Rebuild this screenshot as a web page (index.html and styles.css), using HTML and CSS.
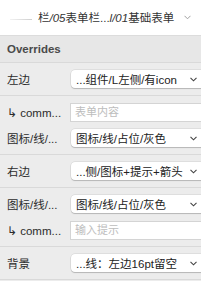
FILE: index.html
```html
<!DOCTYPE html>
<html lang="zh">
<head>
<meta charset="utf-8">
<link rel="stylesheet" href="styles.css">
</head>
<body>
<div class="panel">
  <div class="top">
    <span class="thumb"></span>
    <span class="path">栏<i>/05</i>表单栏...<i>l/01</i>基础表单</span>
    <svg class="chev top-chev" width="7" height="5" viewBox="0 0 7 5"><path d="M0.5 0.8 L3.5 3.8 L6.5 0.8" fill="none" stroke="#a0a0a0" stroke-width="1"/></svg>
  </div>
  <div class="hdr">Overrides</div>

  <div class="group">
    <div class="row">
      <span class="label">左边</span>
      <div class="select"><span class="val">...组件/L左侧/有icon</span><svg class="chev" width="7" height="5" viewBox="0 0 7 5"><path d="M0.5 0.8 L3.5 3.8 L6.5 0.8" fill="none" stroke="#444" stroke-width="1.1"/></svg></div>
    </div>
  </div>

  <div class="group">
    <div class="row">
      <span class="label">↳ comm...</span>
      <div class="input">表单内容</div>
    </div>
    <div class="row">
      <span class="label">图标/线/...</span>
      <div class="select"><span class="val">图标/线/占位/灰色</span><svg class="chev" width="7" height="5" viewBox="0 0 7 5"><path d="M0.5 0.8 L3.5 3.8 L6.5 0.8" fill="none" stroke="#444" stroke-width="1.1"/></svg></div>
    </div>
  </div>

  <div class="group">
    <div class="row">
      <span class="label">右边</span>
      <div class="select"><span class="val">...侧/图标+提示+箭头</span><svg class="chev" width="7" height="5" viewBox="0 0 7 5"><path d="M0.5 0.8 L3.5 3.8 L6.5 0.8" fill="none" stroke="#444" stroke-width="1.1"/></svg></div>
    </div>
  </div>

  <div class="group">
    <div class="row">
      <span class="label">图标/线/...</span>
      <div class="select"><span class="val">图标/线/占位/灰色</span><svg class="chev" width="7" height="5" viewBox="0 0 7 5"><path d="M0.5 0.8 L3.5 3.8 L6.5 0.8" fill="none" stroke="#444" stroke-width="1.1"/></svg></div>
    </div>
    <div class="row">
      <span class="label">↳ comm...</span>
      <div class="input">输入提示</div>
    </div>
  </div>

  <div class="group">
    <div class="row">
      <span class="label">背景</span>
      <div class="select"><span class="val">...线：左边16pt留空</span><svg class="chev" width="7" height="5" viewBox="0 0 7 5"><path d="M0.5 0.8 L3.5 3.8 L6.5 0.8" fill="none" stroke="#444" stroke-width="1.1"/></svg></div>
    </div>
  </div>
</div>
</body>
</html>
```

FILE: styles.css
```css
html, body {
  margin: 0;
  padding: 0;
  background: #ececec;
}
body {
  width: 201px;
  height: 281px;
  overflow: hidden;
  font-family: "Liberation Sans", "Noto Sans CJK SC", sans-serif;
  font-size: 11.5px;
  color: #2b2b2b;
}
.panel {
  width: 201px;
}
.top {
  height: 35px;
  background: #ffffff;
  border-bottom: 1px solid #dcdcdc;
  display: flex;
  align-items: center;
  padding-left: 10px;
  box-sizing: content-box;
}
.thumb {
  width: 22px;
  height: 1px;
  margin-top: 4px;
  background: linear-gradient(to right, #f2f2f2, #cfcfcf);
  flex: none;
}
.path {
  margin-left: 6px;
  font-size: 11.5px;
  line-height: 16px;
  color: #333;
  white-space: nowrap;
}
.path i {
  font-style: italic;
}
.top-chev {
  margin-left: 10px;
  flex: none;
}
.hdr {
  height: 26px;
  line-height: 26px;
  background: #e7e7e7;
  border-bottom: 1px solid #d9d9d9;
  padding-left: 7px;
  font-weight: 700;
  font-size: 11.5px;
  color: #4a4a4a;
}
.group {
  background: #ececec;
  border-bottom: 1px solid #d9d9d9;
  padding: 7px 0 7px 7px;
  display: flex;
  flex-direction: column;
  gap: 8px;
}
.row {
  display: grid;
  grid-template-columns: 63px 136px;
  align-items: center;
  height: 18px;
}
.label {
  font-size: 11.5px;
  white-space: nowrap;
  color: #2b2b2b;
}
.select {
  height: 18px;
  width: 136px;
  margin-left: 1px;
  background: #ffffff;
  border-radius: 4px;
  box-shadow: 0 0 0 0.5px rgba(0,0,0,0.12), 0 1px 1px rgba(0,0,0,0.18);
  display: flex;
  align-items: center;
  padding-left: 5px;
  box-sizing: border-box;
}
.val {
  font-size: 11.5px;
  white-space: nowrap;
  color: #222;
}
.select .chev {
  margin-left: auto;
  margin-right: 10px;
  flex: none;
}
.input {
  height: 19px;
  width: 136px;
  background: #ffffff;
  border: 1px solid #d4d4d4;
  box-sizing: border-box;
  padding-left: 4px;
  font-size: 11px;
  line-height: 17px;
  color: #bdbdbd;
}
```
